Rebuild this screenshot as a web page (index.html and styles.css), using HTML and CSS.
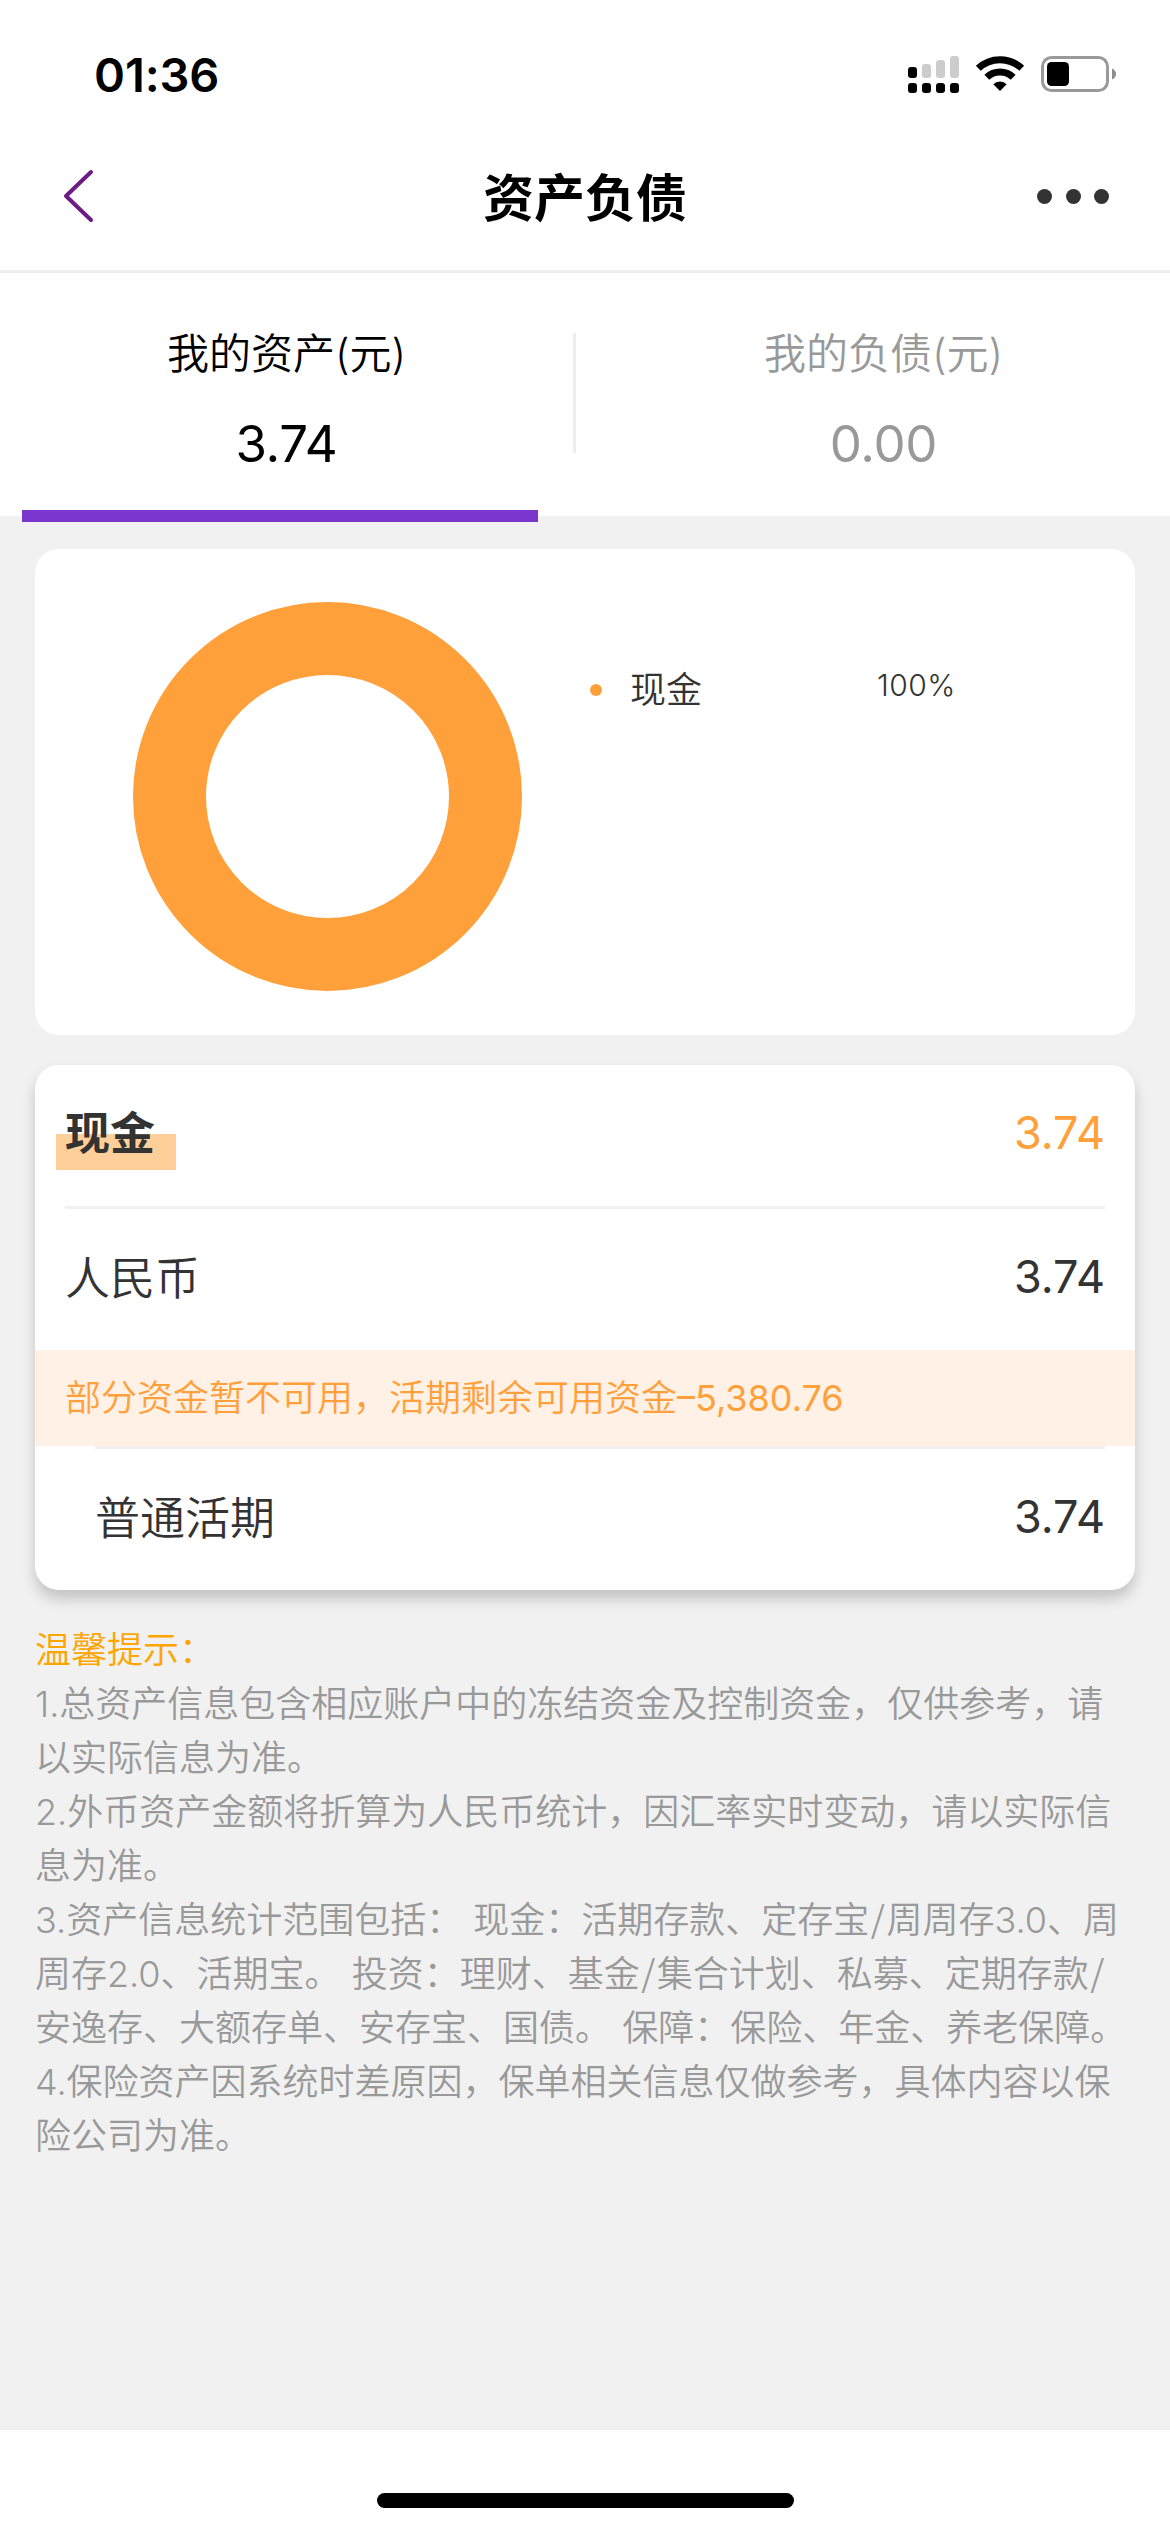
FILE: index.html
```html
<!DOCTYPE html>
<html lang="zh-CN">
<head>
<meta charset="utf-8">
<title>资产负债</title>
<link rel="stylesheet" href="styles.css">
</head>
<body>
<div class="screen">
  <div class="status">
    <span class="time">01:36</span>
    <svg class="status-icons" width="212" height="44" viewBox="0 0 212 44" aria-hidden="true">
      <g fill="#000">
        <rect x="4" y="15" width="9" height="11" rx="3"/>
        <rect x="4" y="31" width="9" height="10" rx="3"/>
        <rect x="18" y="31" width="9" height="10" rx="3"/>
        <rect x="32" y="31" width="9" height="10" rx="3"/>
        <rect x="46" y="31" width="9" height="10" rx="3"/>
      </g>
      <g fill="#ccc">
        <rect x="18" y="12" width="9" height="14" rx="3"/>
        <rect x="32" y="8" width="9" height="18" rx="3"/>
        <rect x="46" y="4" width="9" height="22" rx="3"/>
      </g>
      <g fill="none" stroke="#000" stroke-width="7">
        <path d="M74.300 16.300A31.500 31.500 0 0 1 117.700 16.300"/>
        <path d="M82.800 25.200A19.200 19.200 0 0 1 109.200 25.200"/>
      </g>
      <path d="M96 39L89.300 32.200A9.600 9.600 0 0 1 102.700 32.200Z" fill="#000"/>
      <rect x="138.500" y="5.500" width="65" height="33" rx="9" fill="none" stroke="#999" stroke-width="3"/>
      <rect x="143" y="10" width="22" height="24" rx="4.500" fill="#000"/>
      <path d="M208 16.500Q212 18.500 212 22T208 27.500Z" fill="#8c8c8c"/>
    </svg>
  </div>

  <header class="nav">
    <svg class="back" width="33" height="56" viewBox="0 0 33 56" aria-hidden="true">
      <path d="M30 4L5 28L30 52" fill="none" stroke="#6b1b83" stroke-width="4" stroke-linecap="round" stroke-linejoin="round"/>
    </svg>
    <h1 class="title">资产负债</h1>
    <div class="more"><i></i><i></i><i></i></div>
  </header>

  <nav class="tabs">
    <div class="tab tab-active">
      <span class="tab-label">我的资产(元)</span>
      <span class="tab-value">3.74</span>
    </div>
    <div class="tab tab-debt">
      <span class="tab-label">我的负债(元)</span>
      <span class="tab-value">0.00</span>
    </div>
  </nav>

  <main class="content">
    <section class="card chart">
      <svg class="donut" width="389" height="389" viewBox="0 0 389 389" aria-hidden="true">
        <circle cx="194.500" cy="194.500" r="158" fill="none" stroke="#ffa03a" stroke-width="73"/>
      </svg>
      <div class="legend">
        <i class="legend-dot"></i>
        <span class="legend-name">现金</span>
        <span class="legend-value">100%</span>
      </div>
    </section>

    <section class="card list">
      <div class="row row-head">
        <span class="tag">现金</span>
        <span class="amount amount-orange">3.74</span>
      </div>
      <div class="row">
        <span class="name">人民币</span>
        <span class="amount">3.74</span>
      </div>
      <div class="notice">部分资金暂不可用，活期剩余可用资金<span class="amount">–5,380.76</span></div>
      <div class="row row-sub">
        <span class="name">普通活期</span>
        <span class="amount">3.74</span>
      </div>
    </section>

    <section class="tips">
      <p class="tips-title">温馨提示：</p>
      <p>1.总资产信息包含相应账户中的冻结资金及控制资金，仅供参考，请<br>以实际信息为准。</p>
      <p>2.外币资产金额将折算为人民币统计，因汇率实时变动，请以实际信<br>息为准。</p>
      <p>3.资产信息统计范围包括： 现金：活期存款、定存宝<span class="slash">/</span>周周存3.0、周<br>周存2.0、活期宝。 投资：理财、基金<span class="slash">/</span>集合计划、私募、定期存款<span class="slash">/</span><br>安逸存、大额存单、安存宝、国债。 保障：保险、年金、养老保障。</p>
      <p>4.保险资产因系统时差原因，保单相关信息仅做参考，具体内容以保<br>险公司为准。</p>
    </section>
  </main>

  <footer class="home"><div class="home-bar"></div></footer>
</div>
</body>
</html>
```

FILE: styles.css
```css
* {
  box-sizing: border-box;
}

body {
  margin: 0;
  background: #f1f1f1;
  color: #333;
  font-family: Inter, "Noto Sans CJK SC", sans-serif;
  font-size: 45px;
  font-weight: 350;
}

h1,
p {
  margin: 0;
}

.screen {
  display: flex;
  flex-direction: column;
  width: 1170px;
  height: 2532px;
  overflow: hidden;
}

.status {
  display: flex;
  justify-content: space-between;
  height: 141px;
  padding: 52px 54px 0 94px;
  background: #fff;
}

.time {
  height: 44px;
  color: #000;
  font-size: 47px;
  font-weight: 600;
  line-height: 45px;
  letter-spacing: -0.1px;
}

.nav {
  display: grid;
  grid-template-columns: 200px 1fr 200px;
  align-items: center;
  height: 132px;
  padding: 0 61px 19px 61px;
  border-bottom: 3px solid #eee;
  background: #fff;
}

.title {
  padding-top: 5px;
  color: #000;
  font-size: 51px;
  font-weight: 600;
  line-height: 60px;
  text-align: center;
}

.more {
  display: flex;
  justify-content: flex-end;
  gap: 13.500px;
}

.more i {
  width: 15px;
  height: 15px;
  border-radius: 50%;
  background: #333;
}

.tabs {
  display: flex;
  height: 243px;
  background: #fff;
}

.tab {
  position: relative;
  display: flex;
  flex-direction: column;
  align-items: center;
  width: 573px;
  padding-top: 50px;
  color: #999;
}

.tab-active {
  color: #000;
}

.tab-active::after {
  content: "";
  position: absolute;
  left: 22px;
  bottom: -6px;
  width: 516px;
  height: 12px;
  background: #7b36ce;
}

.tab-debt {
  flex: 1;
  padding-left: 24px;
}

.tab-debt::before {
  content: "";
  position: absolute;
  left: 0;
  top: 60px;
  width: 3px;
  height: 120px;
  background: #eee;
}

.tab-label {
  font-size: 42px;
  line-height: 62px;
}

.tab-value {
  margin-top: 28px;
  font-size: 51px;
  font-weight: 400;
  line-height: 62px;
  letter-spacing: -0.3px;
}

.content {
  display: flex;
  flex: 1;
  flex-direction: column;
  gap: 30px;
  padding: 33px 35px 0;
}

.card {
  border-radius: 24px;
  background: #fff;
}

.chart {
  display: flex;
  align-items: flex-start;
  gap: 68px;
  height: 486px;
  padding: 53px 98px 0;
}

.legend {
  display: grid;
  grid-template-columns: 12px 219px auto;
  column-gap: 28px;
  align-items: center;
  height: 54px;
  margin-top: 61px;
}

.legend-dot {
  width: 12px;
  height: 12px;
  border-radius: 50%;
  background: #ffa03a;
}

.legend-name {
  font-size: 36px;
  line-height: 54px;
}

.legend-value {
  margin-bottom: 9px;
  font-size: 30px;
  line-height: 45px;
  letter-spacing: 0.5px;
}

.list {
  height: 525px;
  box-shadow: 0 9px 14px rgba(0, 0, 0, 0.19);
}

.row {
  display: flex;
  align-items: center;
  justify-content: space-between;
  height: 141px;
  margin: 0 30px;
  padding-bottom: 6px;
}

.row-head {
  height: 144px;
  border-bottom: 3px solid #f1f1f1;
}

.row-sub {
  height: 144px;
  margin-left: 60px;
  border-top: 3px solid #f1f1f1;
}

.tag {
  height: 75px;
  margin-left: -9px;
  padding: 4px 21px 0 9px;
  background: linear-gradient(#ffcf99, #ffcf99) 0 100% / 100% 36px no-repeat;
  font-weight: 700;
  line-height: 69px;
}

.name {
  padding-bottom: 3px;
}

.amount {
  font-weight: 400;
}

.amount-orange {
  color: #ffa03a;
}

.notice {
  height: 96px;
  padding-left: 30px;
  background: #fff1e5;
  color: #ffa03a;
  font-size: 36px;
  line-height: 96px;
}

.tips {
  margin-top: 3px;
  color: #999;
  font-size: 36px;
  line-height: 54px;
  white-space: nowrap;
  word-spacing: 1px;
}

.tips-title {
  color: #ffa500;
}

.slash {
  padding: 0 1.500px;
  font-family: "Noto Sans CJK SC", sans-serif;
  line-height: 1;
}

.home {
  display: flex;
  justify-content: center;
  height: 102px;
  padding-top: 63px;
  background: #fff;
}

.home-bar {
  width: 417px;
  height: 15px;
  border-radius: 8px;
  background: #000;
}
```
